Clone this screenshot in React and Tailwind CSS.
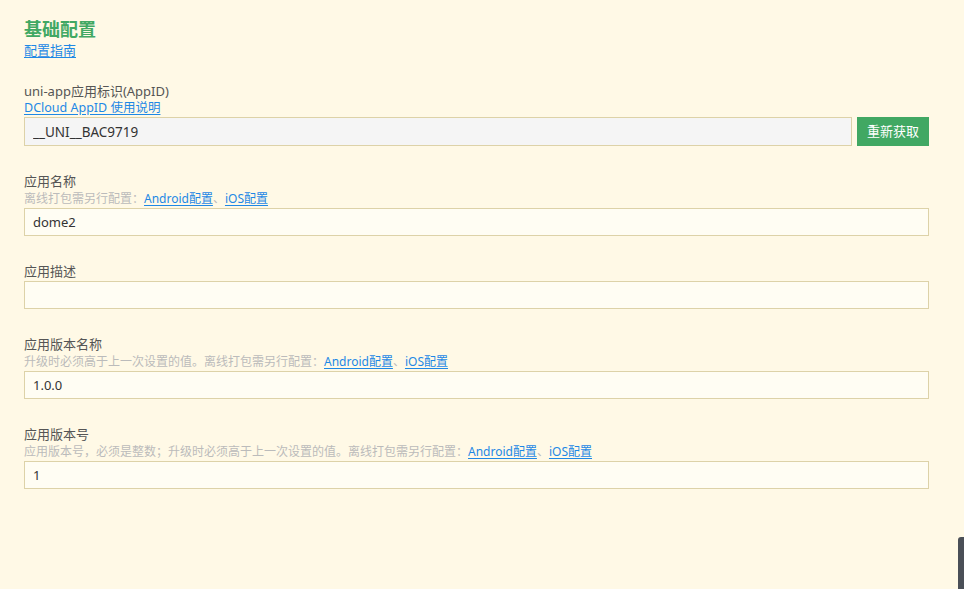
import React from 'react';

const font = { fontFamily: '"Noto Sans", "Noto Sans CJK SC", sans-serif' };

const Link = ({ children }) => (
  <a href="#" className="text-[#1e88e5] underline underline-offset-2">
    {children}
  </a>
);

const PlatformLinks = () => (
  <>
    <Link>Android配置</Link>、<Link>iOS配置</Link>
  </>
);

const Field = ({ label, hint, value }) => (
  <div className="mt-[26px]">
    <div className="text-[13px] leading-[18px] text-[#555]">{label}</div>
    {hint && <div className="text-[12px] leading-[17px] text-[#bbb]">{hint}</div>}
    <input
      readOnly
      value={value}
      className="mt-[1px] block h-[28px] w-full border border-[#ddd2a8] bg-[#fffdf3] px-2 text-[13px] text-[#333] outline-none"
    />
  </div>
);

export default function App() {
  return (
    <div className="relative min-h-[589px] bg-[#fff9e6] px-6 pt-[17px]" style={font}>
      <h1 className="text-[18px] font-bold leading-[24px] text-[#41a863]">基础配置</h1>
      <div className="text-[13px] leading-[18px]">
        <Link>配置指南</Link>
      </div>

      <div className="mt-[23px]">
        <div className="text-[13px] leading-[18px] text-[#555]">uni-app应用标识(AppID)</div>
        <div className="text-[12.5px] leading-[16px]">
          <Link>DCloud AppID 使用说明</Link>
        </div>
        <div className="mt-[1px] flex gap-[5px] pr-[11px]">
          <input
            readOnly
            value="__UNI__BAC9719"
            className="block h-[29px] flex-1 border border-[#ddd2a8] bg-[#f5f5f5] px-2 text-[13.5px] text-[#333] outline-none"
          />
          <button className="h-[29px] w-[72px] bg-[#41a863] text-[13px] text-white">重新获取</button>
        </div>
      </div>

      <div className="pr-[11px]">
        <Field
          label="应用名称"
          hint={<>离线打包需另行配置：<PlatformLinks /></>}
          value="dome2"
        />
        <Field label="应用描述" value="" />
        <Field
          label="应用版本名称"
          hint={<>升级时必须高于上一次设置的值。离线打包需另行配置：<PlatformLinks /></>}
          value="1.0.0"
        />
        <Field
          label="应用版本号"
          hint={<>应用版本号，必须是整数；升级时必须高于上一次设置的值。离线打包需另行配置：<PlatformLinks /></>}
          value="1"
        />
      </div>

      <div className="absolute bottom-0 right-0 h-[52px] w-[6px] rounded-tl-[3px] bg-[#4a4f57]" />
    </div>
  );
}
